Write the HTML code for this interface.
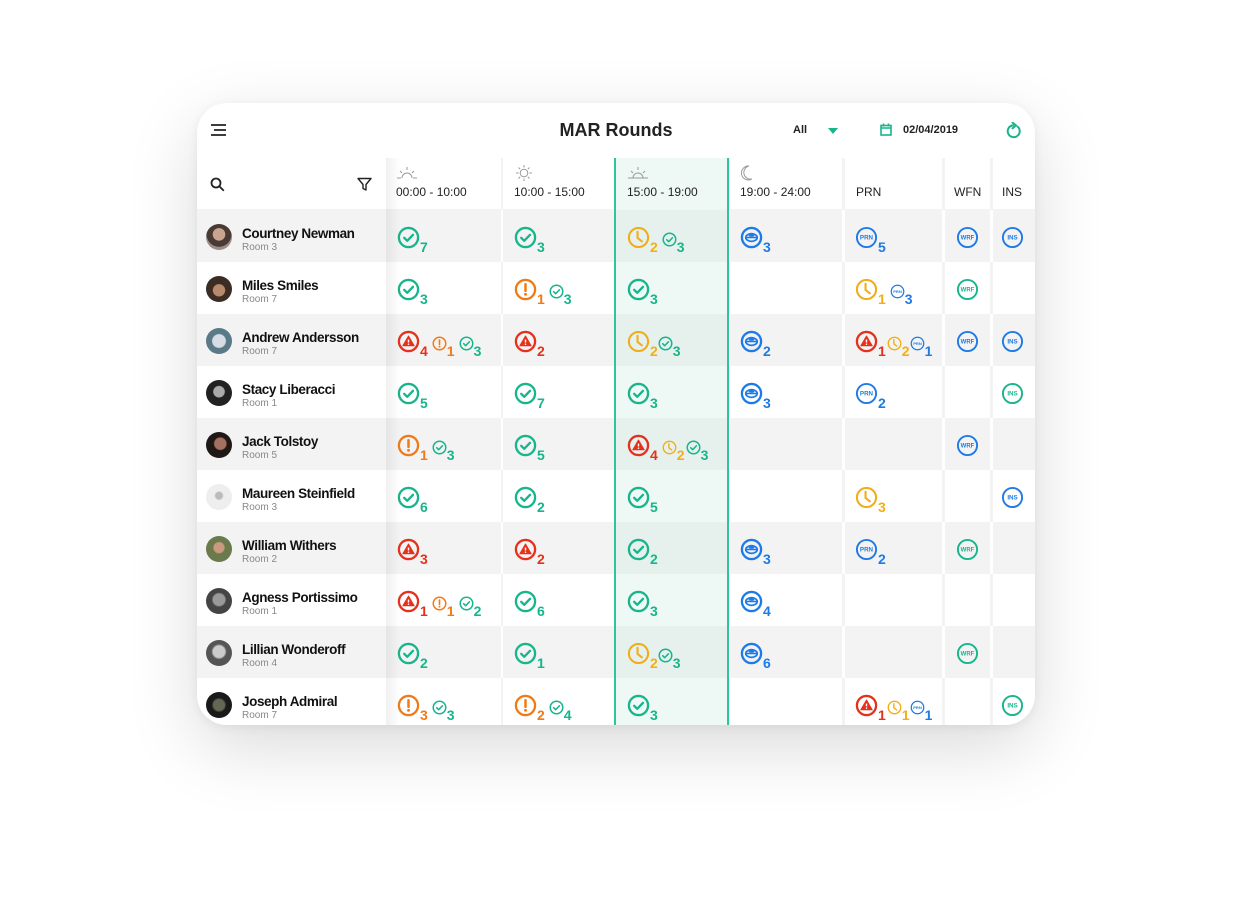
<!DOCTYPE html>
<html><head><meta charset="utf-8">
<style>
*{margin:0;padding:0;box-sizing:border-box}
body{width:1241px;height:899px;background:#fff;font-family:"Liberation Sans",sans-serif;position:relative;overflow:hidden}
.card{position:absolute;left:197px;top:103px;width:838px;height:622px;background:#fff;border-radius:30px;overflow:hidden;box-shadow:0 22px 70px rgba(0,0,0,.15),0 2px 10px rgba(0,0,0,.06)}
.hdr{position:absolute;left:0;top:0;width:838px;height:55px}
.title{position:absolute;left:0;width:838px;top:17px;text-align:center;font-size:18px;font-weight:bold;color:#222}
.row{position:absolute;left:0;width:838px;height:52px}
.g{background:#fff}.g .c{background:#f3f3f3}
.w{background:#f3f3f3}.w .c{background:#fff}
.c{position:absolute;top:0;height:52px;display:flex;align-items:flex-start;padding-top:16px}
.k1{left:189px;width:115px;padding-left:11px}.k2{left:306px;width:111px;padding-left:11px}
.k3{left:419px;width:111px;padding-left:11px}.k4{left:533px;width:112px;padding-left:10px}
.k5{left:648px;width:97px;padding-left:10px}.k6{left:748px;width:45px;justify-content:center}.k7{left:796px;width:42px;justify-content:center;padding-right:4px}
.g .k3{background:#e6f1ee}.w .k3{background:#eef8f5}
.k0{left:0;width:189px;padding-top:14px;padding-left:9px}
.av{width:26px;height:26px;border-radius:50%;margin-top:0;margin-right:10px;flex:none}
.nm{font-size:13.5px;font-weight:bold;color:#111;line-height:16px;letter-spacing:-.4px;margin-top:2px}
.rm{font-size:10px;color:#888;line-height:12px}
svg{flex:none}
.b{width:23px;height:23px}.s{width:15px;height:15px;margin-top:6px;margin-left:4px}
.n{font-size:14px;font-weight:bold;margin-top:14px;line-height:14px}
.sn{font-size:14px;font-weight:bold;margin-top:14px;line-height:14px}
.gr{color:#16b58c}.or{color:#f07a17}.rd{color:#e5301c}.yl{color:#f2ae17}.bl{color:#1e7ae6}
.colh{position:absolute;top:55px;height:51px;font-size:12px;color:#222}
.colh span{position:absolute;bottom:10px}
</style></head><body>
<svg width="0" height="0" style="position:absolute">
<defs>
<symbol id="chk" viewBox="0 0 24 24"><circle cx="12" cy="12" r="10" fill="none" stroke="currentColor" stroke-width="2.4"/><path d="M7.5 12.3l3.2 3.2 6-6.3" fill="none" stroke="currentColor" stroke-width="2.4" stroke-linecap="round" stroke-linejoin="round"/></symbol>
<symbol id="exc" viewBox="0 0 24 24"><circle cx="12" cy="12" r="10" fill="none" stroke="currentColor" stroke-width="2.4"/><path d="M12 6.5v7" stroke="currentColor" stroke-width="2.6" stroke-linecap="round"/><circle cx="12" cy="17" r="1.5" fill="currentColor"/></symbol>
<symbol id="wrn" viewBox="0 0 24 24"><circle cx="12" cy="12" r="10" fill="none" stroke="currentColor" stroke-width="2.4"/><path d="M12 6.3l6 10.2H6z" fill="currentColor" stroke="currentColor" stroke-width="1" stroke-linejoin="round"/><path d="M12 10v3" stroke="#fff" stroke-width="1.5"/><circle cx="12" cy="14.8" r=".8" fill="#fff"/></symbol>
<symbol id="clk" viewBox="0 0 24 24"><circle cx="12" cy="12" r="10" fill="none" stroke="currentColor" stroke-width="2.2"/><path d="M11 6v6.5l4.5 3.5" fill="none" stroke="currentColor" stroke-width="2.2" stroke-linecap="round" stroke-linejoin="round"/></symbol>
<symbol id="pil" viewBox="0 0 24 24"><circle cx="12" cy="12" r="10" fill="none" stroke="currentColor" stroke-width="2.4"/><ellipse cx="12" cy="12" rx="6" ry="4" fill="none" stroke="currentColor" stroke-width="1.8"/><path d="M6 12h12" stroke="currentColor" stroke-width="1.6"/><ellipse cx="12" cy="10" rx="3" ry="1.2" fill="currentColor"/></symbol>
<symbol id="prn" viewBox="0 0 24 24"><circle cx="12" cy="12" r="10" fill="none" stroke="currentColor" stroke-width="2"/><text x="12" y="14.3" font-size="6.5" font-family="Liberation Sans" font-weight="bold" text-anchor="middle" fill="currentColor">PRN</text></symbol>
<symbol id="wrf" viewBox="0 0 24 24"><circle cx="12" cy="12" r="10" fill="none" stroke="currentColor" stroke-width="2"/><text x="12" y="14.3" font-size="6.3" font-family="Liberation Sans" font-weight="bold" text-anchor="middle" fill="currentColor">WRF</text></symbol>
<symbol id="ins" viewBox="0 0 24 24"><circle cx="12" cy="12" r="10" fill="none" stroke="currentColor" stroke-width="2"/><text x="12" y="14.3" font-size="6.5" font-family="Liberation Sans" font-weight="bold" text-anchor="middle" fill="currentColor">INS</text></symbol>
</defs></svg>

<div class="card">
 <div class="hdr">
  <svg style="position:absolute;left:14px;top:21px" width="16" height="12" viewBox="0 0 16 12"><path d="M0 1h15M3 6h12M0 11h15" stroke="#222" stroke-width="1.8"/></svg>
  <div class="title">MAR Rounds</div>
  <div style="position:absolute;left:596px;top:21px;font-size:11px;font-weight:bold;color:#222">All</div>
  <div style="position:absolute;left:631px;top:25px;width:0;height:0;border-left:5px solid transparent;border-right:5px solid transparent;border-top:6px solid #16b58c"></div>
  <svg style="position:absolute;left:683px;top:20px" width="12" height="13" viewBox="0 0 12 13"><rect x="1" y="2.5" width="10" height="9.5" fill="none" stroke="#16b58c" stroke-width="1.6"/><path d="M1 5h10M3.5 0.5v3M8.5 0.5v3" stroke="#16b58c" stroke-width="1.6"/></svg>
  <div style="position:absolute;left:706px;top:21px;font-size:11px;font-weight:bold;color:#222">02/04/2019</div>
  <svg style="position:absolute;left:809px;top:19px" width="16" height="17" viewBox="0 0 16 17"><path d="M11.5 4.5A6 6 0 1 1 7 3.2" fill="none" stroke="#16b58c" stroke-width="2" stroke-linecap="round"/><path d="M6.5 0.5L10 3.4l-3.5 2.9" fill="none" stroke="#16b58c" stroke-width="2" stroke-linecap="round" stroke-linejoin="round"/></svg>
 </div>
 <div style="position:absolute;left:0;top:55px;width:838px;height:52px;background:#f3f3f3"></div>
 <div class="colh" style="left:0;width:189px;background:#fff">
  <svg style="position:absolute;left:13px;top:19px" width="15" height="15" viewBox="0 0 15 15"><circle cx="6" cy="6" r="4.5" fill="none" stroke="#222" stroke-width="1.8"/><path d="M9.3 9.3l4.5 4.5" stroke="#222" stroke-width="1.8"/></svg>
  <svg style="position:absolute;left:160px;top:19px" width="15" height="15" viewBox="0 0 15 15"><path d="M1 1.5h13L9 7.5v5.5l-3-1.5V7.5z" fill="none" stroke="#222" stroke-width="1.4" stroke-linejoin="round"/></svg>
 </div>
 <div class="colh" style="left:189px;width:115px;background:#fff">
  <svg style="position:absolute;left:10px;top:8px" width="22" height="14" viewBox="0 0 22 14"><path d="M6 12a5 5 0 0 1 10 0M1 12h4M17 12h4M11 1v3M4 5l2 2M18 5l-2 2" fill="none" stroke="#999" stroke-width="1"/></svg>
  <span style="left:10px">00:00 - 10:00</span></div>
 <div class="colh" style="left:306px;width:111px;background:#fff">
  <svg style="position:absolute;left:11px;top:6px" width="20" height="18" viewBox="0 0 20 18"><circle cx="10" cy="9" r="3.8" fill="none" stroke="#999" stroke-width="1"/><path d="M10 1v2.5M10 14.5v2.5M2 9h2.5M15.5 9h2.5M4.5 3.5l1.7 1.7M15.5 3.5l-1.7 1.7M4.5 14.5l1.7-1.7M15.5 14.5l-1.7-1.7" stroke="#999" stroke-width="1"/></svg>
  <span style="left:11px">10:00 - 15:00</span></div>
 <div class="colh" style="left:419px;width:111px;background:#eef8f5">
  <svg style="position:absolute;left:11px;top:8px" width="22" height="14" viewBox="0 0 22 14"><path d="M6 12a5 5 0 0 1 10 0M1 12h20M11 1v3M4 5l2 2M18 5l-2 2" fill="none" stroke="#999" stroke-width="1"/></svg>
  <span style="left:11px">15:00 - 19:00</span></div>
 <div class="colh" style="left:533px;width:112px;background:#fff">
  <svg style="position:absolute;left:10px;top:6px" width="14" height="18" viewBox="0 0 14 18"><path d="M9 2a7 7 0 1 0 3 13A6 6 0 0 1 9 2z" fill="none" stroke="#999" stroke-width="1"/></svg>
  <span style="left:10px">19:00 - 24:00</span></div>
 <div class="colh" style="left:648px;width:97px;background:#fff"><span style="left:11px">PRN</span></div>
 <div class="colh" style="left:748px;width:45px;background:#fff"><span style="left:9px">WFN</span></div>
 <div class="colh" style="left:796px;width:42px;background:#fff"><span style="left:9px">INS</span></div>

 <div class="row g" style="top:107px">
  <div class="c k0"><div class="av" style="background:radial-gradient(circle at 50% 40%,#c9a590 0 30%,#4a3a34 32% 60%,#9b8d88 62%)"></div><div><div class="nm">Courtney Newman</div><div class="rm">Room 3</div></div></div>
  <div class="c k1 gr"><svg class="b"><use href="#chk"/></svg><span class="n">7</span></div>
  <div class="c k2 gr"><svg class="b"><use href="#chk"/></svg><span class="n">3</span></div>
  <div class="c k3"><svg class="b yl"><use href="#clk"/></svg><span class="n yl">2</span><svg class="s gr"><use href="#chk"/></svg><span class="sn gr">3</span></div>
  <div class="c k4 bl"><svg class="b"><use href="#pil"/></svg><span class="n">3</span></div>
  <div class="c k5 bl"><svg class="b"><use href="#prn"/></svg><span class="n">5</span></div>
  <div class="c k6 bl"><svg class="b"><use href="#wrf"/></svg></div>
  <div class="c k7 bl"><svg class="b"><use href="#ins"/></svg></div>
 </div>
 <div class="row w" style="top:159px">
  <div class="c k0"><div class="av" style="background:radial-gradient(circle at 50% 55%,#b88a6c 0 30%,#3b2c24 34%)"></div><div><div class="nm">Miles Smiles</div><div class="rm">Room 7</div></div></div>
  <div class="c k1 gr"><svg class="b"><use href="#chk"/></svg><span class="n">3</span></div>
  <div class="c k2"><svg class="b or"><use href="#exc"/></svg><span class="n or">1</span><svg class="s gr"><use href="#chk"/></svg><span class="sn gr">3</span></div>
  <div class="c k3 gr"><svg class="b"><use href="#chk"/></svg><span class="n">3</span></div>
  <div class="c k4"></div>
  <div class="c k5"><svg class="b yl"><use href="#clk"/></svg><span class="n yl">1</span><svg class="s bl"><use href="#prn"/></svg><span class="sn bl">3</span></div>
  <div class="c k6 gr"><svg class="b"><use href="#wrf"/></svg></div>
  <div class="c k7"></div>
 </div>
 <div class="row g" style="top:211px">
  <div class="c k0"><div class="av" style="background:radial-gradient(circle at 50% 50%,#d8dde5 0 35%,#5a7a88 40%)"></div><div><div class="nm">Andrew Andersson</div><div class="rm">Room 7</div></div></div>
  <div class="c k1"><svg class="b rd"><use href="#wrn"/></svg><span class="n rd">4</span><svg class="s or"><use href="#exc"/></svg><span class="sn or">1</span><svg class="s gr"><use href="#chk"/></svg><span class="sn gr">3</span></div>
  <div class="c k2 rd"><svg class="b"><use href="#wrn"/></svg><span class="n">2</span></div>
  <div class="c k3"><svg class="b yl"><use href="#clk"/></svg><span class="n yl">2</span><svg class="s gr" style="margin-left:0"><use href="#chk"/></svg><span class="sn gr">3</span></div>
  <div class="c k4 bl"><svg class="b"><use href="#pil"/></svg><span class="n">2</span></div>
  <div class="c k5"><svg class="b rd"><use href="#wrn"/></svg><span class="n rd">1</span><svg class="s yl" style="margin-left:1px"><use href="#clk"/></svg><span class="sn yl">2</span><svg class="s bl" style="margin-left:0"><use href="#prn"/></svg><span class="sn bl">1</span></div>
  <div class="c k6 bl"><svg class="b"><use href="#wrf"/></svg></div>
  <div class="c k7 bl"><svg class="b"><use href="#ins"/></svg></div>
 </div>
 <div class="row w" style="top:263px">
  <div class="c k0"><div class="av" style="background:radial-gradient(circle at 50% 45%,#aaa 0 28%,#222 32%)"></div><div><div class="nm">Stacy Liberacci</div><div class="rm">Room 1</div></div></div>
  <div class="c k1 gr"><svg class="b"><use href="#chk"/></svg><span class="n">5</span></div>
  <div class="c k2 gr"><svg class="b"><use href="#chk"/></svg><span class="n">7</span></div>
  <div class="c k3 gr"><svg class="b"><use href="#chk"/></svg><span class="n">3</span></div>
  <div class="c k4 bl"><svg class="b"><use href="#pil"/></svg><span class="n">3</span></div>
  <div class="c k5 bl"><svg class="b"><use href="#prn"/></svg><span class="n">2</span></div>
  <div class="c k6"></div>
  <div class="c k7 gr"><svg class="b"><use href="#ins"/></svg></div>
 </div>
 <div class="row g" style="top:315px">
  <div class="c k0"><div class="av" style="background:radial-gradient(circle at 55% 45%,#a47060 0 28%,#201816 34%)"></div><div><div class="nm">Jack Tolstoy</div><div class="rm">Room 5</div></div></div>
  <div class="c k1"><svg class="b or"><use href="#exc"/></svg><span class="n or">1</span><svg class="s gr"><use href="#chk"/></svg><span class="sn gr">3</span></div>
  <div class="c k2 gr"><svg class="b"><use href="#chk"/></svg><span class="n">5</span></div>
  <div class="c k3"><svg class="b rd"><use href="#wrn"/></svg><span class="n rd">4</span><svg class="s yl"><use href="#clk"/></svg><span class="sn yl">2</span><svg class="s gr" style="margin-left:1px"><use href="#chk"/></svg><span class="sn gr">3</span></div>
  <div class="c k4"></div>
  <div class="c k5"></div>
  <div class="c k6 bl"><svg class="b"><use href="#wrf"/></svg></div>
  <div class="c k7"></div>
 </div>
 <div class="row w" style="top:367px">
  <div class="c k0"><div class="av" style="background:radial-gradient(circle at 50% 45%,#bbb 0 18%,#eee 24%)"></div><div><div class="nm">Maureen Steinfield</div><div class="rm">Room 3</div></div></div>
  <div class="c k1 gr"><svg class="b"><use href="#chk"/></svg><span class="n">6</span></div>
  <div class="c k2 gr"><svg class="b"><use href="#chk"/></svg><span class="n">2</span></div>
  <div class="c k3 gr"><svg class="b"><use href="#chk"/></svg><span class="n">5</span></div>
  <div class="c k4"></div>
  <div class="c k5 yl"><svg class="b"><use href="#clk"/></svg><span class="n">3</span></div>
  <div class="c k6"></div>
  <div class="c k7 bl"><svg class="b"><use href="#ins"/></svg></div>
 </div>
 <div class="row g" style="top:419px">
  <div class="c k0"><div class="av" style="background:radial-gradient(circle at 50% 45%,#c99a80 0 26%,#6b7a4a 32%)"></div><div><div class="nm">William Withers</div><div class="rm">Room 2</div></div></div>
  <div class="c k1 rd"><svg class="b"><use href="#wrn"/></svg><span class="n">3</span></div>
  <div class="c k2 rd"><svg class="b"><use href="#wrn"/></svg><span class="n">2</span></div>
  <div class="c k3 gr"><svg class="b"><use href="#chk"/></svg><span class="n">2</span></div>
  <div class="c k4 bl"><svg class="b"><use href="#pil"/></svg><span class="n">3</span></div>
  <div class="c k5 bl"><svg class="b"><use href="#prn"/></svg><span class="n">2</span></div>
  <div class="c k6 gr"><svg class="b"><use href="#wrf"/></svg></div>
  <div class="c k7"></div>
 </div>
 <div class="row w" style="top:471px">
  <div class="c k0"><div class="av" style="background:radial-gradient(circle at 50% 45%,#999 0 30%,#444 38%)"></div><div><div class="nm">Agness Portissimo</div><div class="rm">Room 1</div></div></div>
  <div class="c k1"><svg class="b rd"><use href="#wrn"/></svg><span class="n rd">1</span><svg class="s or"><use href="#exc"/></svg><span class="sn or">1</span><svg class="s gr"><use href="#chk"/></svg><span class="sn gr">2</span></div>
  <div class="c k2 gr"><svg class="b"><use href="#chk"/></svg><span class="n">6</span></div>
  <div class="c k3 gr"><svg class="b"><use href="#chk"/></svg><span class="n">3</span></div>
  <div class="c k4 bl"><svg class="b"><use href="#pil"/></svg><span class="n">4</span></div>
  <div class="c k5"></div><div class="c k6"></div><div class="c k7"></div>
 </div>
 <div class="row g" style="top:523px">
  <div class="c k0"><div class="av" style="background:radial-gradient(circle at 50% 45%,#ccc 0 30%,#555 40%)"></div><div><div class="nm">Lillian Wonderoff</div><div class="rm">Room 4</div></div></div>
  <div class="c k1 gr"><svg class="b"><use href="#chk"/></svg><span class="n">2</span></div>
  <div class="c k2 gr"><svg class="b"><use href="#chk"/></svg><span class="n">1</span></div>
  <div class="c k3"><svg class="b yl"><use href="#clk"/></svg><span class="n yl">2</span><svg class="s gr" style="margin-left:0"><use href="#chk"/></svg><span class="sn gr">3</span></div>
  <div class="c k4 bl"><svg class="b"><use href="#pil"/></svg><span class="n">6</span></div>
  <div class="c k5"></div>
  <div class="c k6 gr"><svg class="b"><use href="#wrf"/></svg></div>
  <div class="c k7"></div>
 </div>
 <div class="row w" style="top:575px">
  <div class="c k0"><div class="av" style="background:radial-gradient(circle at 50% 50%,#665 0 30%,#1a1a1a 40%)"></div><div><div class="nm">Joseph Admiral</div><div class="rm">Room 7</div></div></div>
  <div class="c k1"><svg class="b or"><use href="#exc"/></svg><span class="n or">3</span><svg class="s gr"><use href="#chk"/></svg><span class="sn gr">3</span></div>
  <div class="c k2"><svg class="b or"><use href="#exc"/></svg><span class="n or">2</span><svg class="s gr"><use href="#chk"/></svg><span class="sn gr">4</span></div>
  <div class="c k3 gr"><svg class="b"><use href="#chk"/></svg><span class="n">3</span></div>
  <div class="c k4"></div>
  <div class="c k5"><svg class="b rd"><use href="#wrn"/></svg><span class="n rd">1</span><svg class="s yl" style="margin-left:1px"><use href="#clk"/></svg><span class="sn yl">1</span><svg class="s bl" style="margin-left:0"><use href="#prn"/></svg><span class="sn bl">1</span></div>
  <div class="c k6"></div>
  <div class="c k7 gr"><svg class="b"><use href="#ins"/></svg></div>
 </div>
 <div style="position:absolute;left:189px;top:55px;width:14px;height:567px;background:linear-gradient(90deg,rgba(0,0,0,.06),rgba(0,0,0,0))"></div>
 <div style="position:absolute;left:417px;top:55px;width:2px;height:567px;background:#2ec4a0"></div>
 <div style="position:absolute;left:530px;top:55px;width:2px;height:567px;background:#2ec4a0"></div>
</div>
</body></html>
